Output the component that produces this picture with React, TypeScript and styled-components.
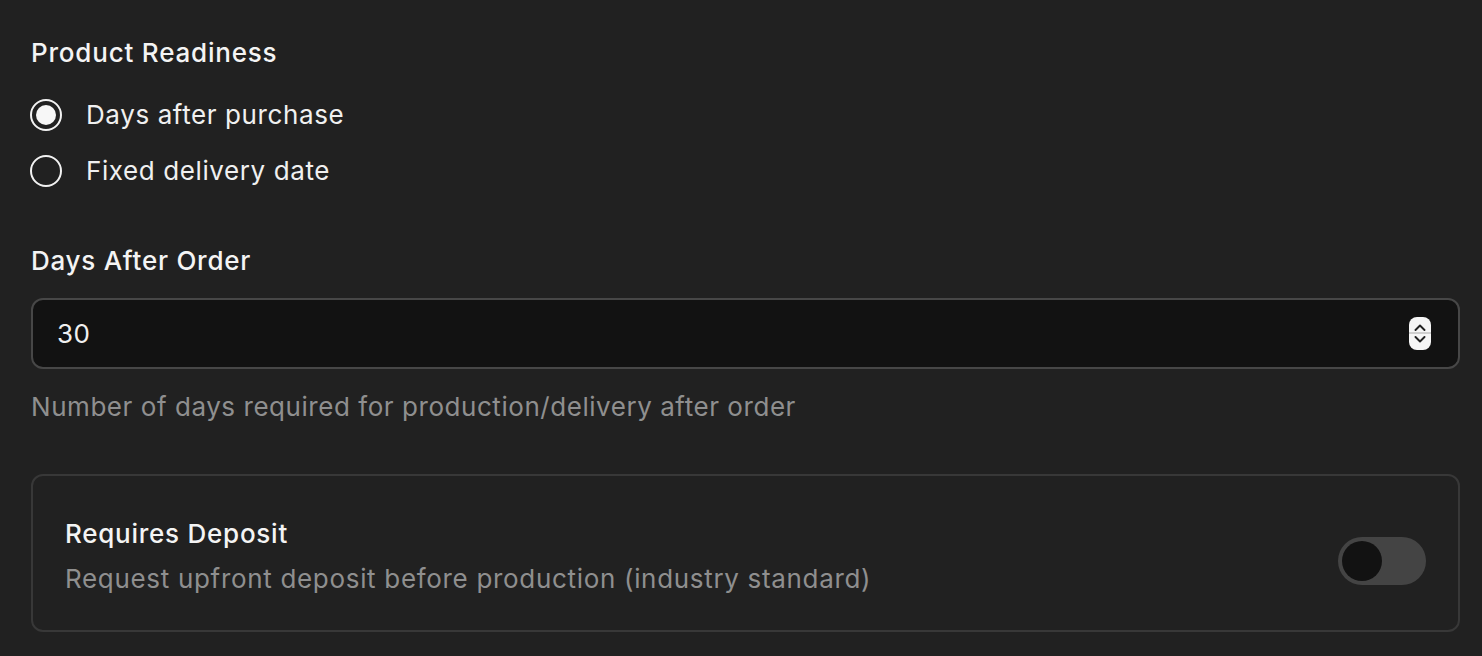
import React, { useState } from 'react';
import styled, { createGlobalStyle } from 'styled-components';

const GlobalStyle = createGlobalStyle`
  html, body {
    margin: 0;
    padding: 0;
    background: #212121;
  }
  body {
    font-family: Inter, "Noto Sans", sans-serif;
    color: #f2f2f2;
    -webkit-font-smoothing: antialiased;
  }
`;

const Page = styled.div`
  display: flex;
  flex-direction: column;
  padding: 35px 22px 0 31px;
  width: 100%;
  box-sizing: border-box;
  height: 656px;
`;

const SectionTitle = styled.div`
  font-size: 26px;
  font-weight: 500;
  line-height: 36px;
  letter-spacing: 0.8px;
  color: #f4f4f4;
`;

const RadioGroup = styled.div`
  display: flex;
  flex-direction: column;
  gap: 24px;
  margin-top: 28px;
`;

const RadioRow = styled.label`
  display: flex;
  align-items: center;
  gap: 24px;
  font-size: 26px;
  line-height: 32px;
  letter-spacing: 0.6px;
  color: #f0f0f0;
  cursor: pointer;
`;

const RadioCircle = styled.span<{ checked: boolean }>`
  width: 32px;
  height: 32px;
  box-sizing: border-box;
  border-radius: 50%;
  border: 2px solid #f2f2f2;
  display: flex;
  align-items: center;
  justify-content: center;
  flex-shrink: 0;
  margin-left: -1px;

  &::after {
    content: '';
    width: 20px;
    height: 20px;
    border-radius: 50%;
    background: #f7f7f7;
    display: ${({ checked }) => (checked ? 'block' : 'none')};
  }
`;

const FieldLabel = styled.div`
  font-size: 26px;
  font-weight: 500;
  line-height: 36px;
  letter-spacing: 0.75px;
  margin-top: 56px;
  color: #f4f4f4;
`;

const InputBox = styled.div`
  margin-top: 19px;
  height: 71px;
  box-sizing: border-box;
  border: 2px solid #474747;
  border-radius: 12px;
  background: #121212;
  display: flex;
  align-items: center;
  padding: 0 27px 0 24px;
`;

const NumberText = styled.div`
  flex: 1;
  font-size: 26px;
  letter-spacing: 0.5px;
  color: #f0f0f0;
`;

const Spinner = styled.div`
  width: 22px;
  height: 33px;
  border-radius: 8px;
  background: #f6f6f6;
  display: flex;
  flex-direction: column;
  align-items: center;
  justify-content: center;
  gap: 5px;
  position: relative;

  &::before {
    content: '';
    position: absolute;
    left: 0;
    right: 0;
    top: 15px;
    height: 2px;
    background: #cfcfcf;
  }
`;

const Helper = styled.div`
  margin-top: 22px;
  font-size: 26px;
  line-height: 32px;
  letter-spacing: 0.55px;
  color: #8f8f8f;
`;

const Card = styled.div`
  margin-top: 51px;
  height: 158px;
  box-sizing: border-box;
  border: 2px solid #383838;
  border-radius: 12px;
  display: flex;
  align-items: center;
  justify-content: space-between;
  padding: 4px 32px 0 32px;
`;

const CardText = styled.div`
  display: flex;
  flex-direction: column;
  gap: 11px;
`;

const CardTitle = styled.div`
  font-size: 26px;
  font-weight: 500;
  line-height: 36px;
  letter-spacing: 0.75px;
  color: #f4f4f4;
`;

const CardDesc = styled.div`
  font-size: 26px;
  line-height: 32px;
  letter-spacing: 0.68px;
  color: #8f8f8f;
`;

const Toggle = styled.button<{ on: boolean }>`
  width: 88px;
  height: 48px;
  border-radius: 24px;
  border: none;
  padding: 4px;
  background: ${({ on }) => (on ? '#f0f0f0' : '#444444')};
  display: flex;
  justify-content: ${({ on }) => (on ? 'flex-end' : 'flex-start')};
  align-items: center;
  cursor: pointer;
  margin-top: 12px;
`;

const Thumb = styled.span`
  width: 40px;
  height: 40px;
  border-radius: 50%;
  background: #121212;
`;

const Chevron = ({ up }: { up: boolean }) => (
  <svg width="12" height="7" viewBox="0 0 12 7" fill="none">
    <path
      d={up ? 'M1.5 6 L6 1.5 L10.5 6' : 'M1.5 1 L6 5.5 L10.5 1'}
      stroke="#222"
      strokeWidth="1.9"
      strokeLinecap="round"
      strokeLinejoin="round"
    />
  </svg>
);

export default function App() {
  const [mode, setMode] = useState<'days' | 'fixed'>('days');
  const [deposit, setDeposit] = useState(false);

  return (
    <>
      <GlobalStyle />
      <Page>
        <SectionTitle>Product Readiness</SectionTitle>
        <RadioGroup>
          <RadioRow onClick={() => setMode('days')}>
            <RadioCircle checked={mode === 'days'} />
            Days after purchase
          </RadioRow>
          <RadioRow onClick={() => setMode('fixed')}>
            <RadioCircle checked={mode === 'fixed'} />
            Fixed delivery date
          </RadioRow>
        </RadioGroup>

        <FieldLabel>Days After Order</FieldLabel>
        <InputBox>
          <NumberText>30</NumberText>
          <Spinner>
            <Chevron up />
            <Chevron up={false} />
          </Spinner>
        </InputBox>
        <Helper>Number of days required for production/delivery after order</Helper>

        <Card>
          <CardText>
            <CardTitle>Requires Deposit</CardTitle>
            <CardDesc>Request upfront deposit before production (industry standard)</CardDesc>
          </CardText>
          <Toggle on={deposit} onClick={() => setDeposit(!deposit)}>
            <Thumb />
          </Toggle>
        </Card>
      </Page>
    </>
  );
}
